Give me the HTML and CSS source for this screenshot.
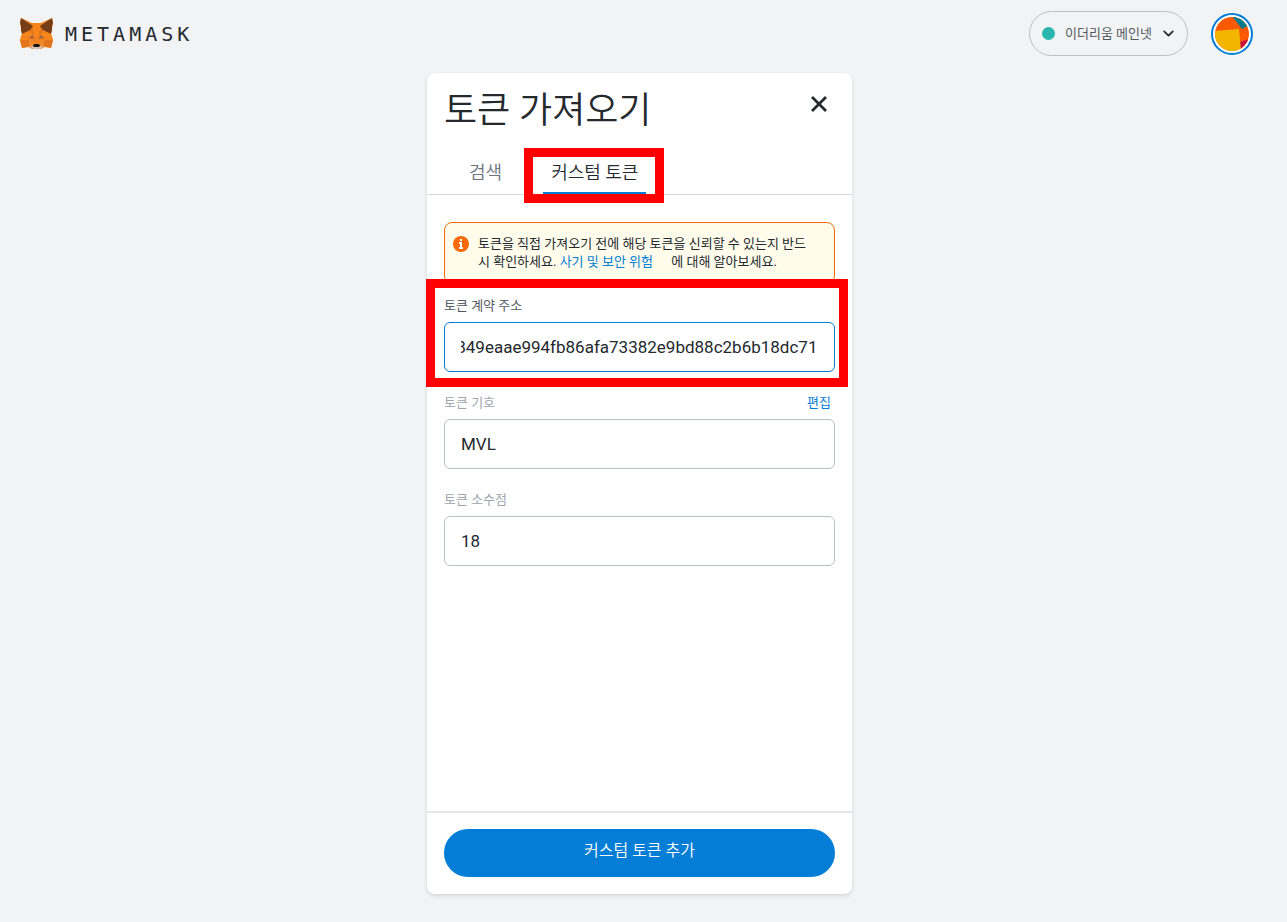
FILE: index.html
```html
<!DOCTYPE html>
<html lang="ko">
<head>
<meta charset="utf-8">
<meta name="viewport" content="width=device-width, initial-scale=1">
<title>MetaMask</title>
<link rel="stylesheet" href="styles.css">
</head>
<body>
<header class="app-header">
  <a class="brand" href="#">
    <svg class="brand-fox" viewBox="0 0 35 33" aria-hidden="true">
      <path fill="#f08223" d="M2 1l11 5h9l11-5 1 5-2 11 2 6-2 8-7-1-3 2h-9l-3-2-7 1-2-8 2-6L1 6z"/>
      <path fill="#f6851b" d="M13 6h9l-2 13h-5z"/>
      <path fill="#e2761b" d="M13 6l2 13-5-3zM22 6l-2 13 5-3z"/>
      <path fill="#763d16" d="M2 1l12 8-3 4-8 4-1-4 0-4-1-3zM33 1L21 9l3 4 8 4 1-4 0-4 1-3z"/>
      <path fill="#f6851b" d="M3 17l8-3 3 5-4 3-9 1zM32 17l-8-3-3 5 4 3 9 1z"/>
      <path fill="#e4751f" d="M1 23h9l0 6-7 2zM34 23h-9l0 6 7 2z"/>
      <path fill="#f08a30" d="M10 22l5 4-1 3-4 0zM25 22l-5 4 1 3 4 0z"/>
      <path fill="#cd6116" d="M9 21l5-3 1 4zM26 21l-5-3-1 4z"/>
      <path fill="#77706c" d="M10 20l4-1 0 2zM25 20l-4-1 0 2z"/>
      <path fill="#d7c1b3" d="M11 29l3 0h7l3 0-3 3h-7z"/>
      <path fill="#161616" d="M15 27h5l1 2-1 1h-5l-1-1z"/>
    </svg>
    <span class="brand-name">METAMASK</span>
  </a>
  <div class="header-actions">
    <button class="network" type="button">
      <span class="network-dot"></span>
      <span>이더리움 메인넷</span>
      <svg class="network-chevron" viewBox="0 0 12 8" aria-hidden="true"><path d="M2 2l4 4 4-4" fill="none" stroke="#24292e" stroke-width="1.6" stroke-linecap="round" stroke-linejoin="round"/></svg>
    </button>
    <button class="account" type="button" aria-label="계정">
      <svg class="account-icon" viewBox="0 0 34 34" aria-hidden="true">
        <clipPath id="disc"><circle cx="17" cy="17" r="17"/></clipPath>
        <g clip-path="url(#disc)">
          <path fill="#fb5a02" d="M0 0h34v34H0z"/>
          <path fill="#037d8e" d="M17 -1l10 13 9-5V-1z"/>
          <path fill="#c8143c" d="M25 25l9-3v12h-9z"/>
          <path fill="#f3b500" d="M-1 14l25-2 2 22H-1z"/>
        </g>
      </svg>
    </button>
  </div>
</header>

<main class="page">
  <section class="card">
    <div class="card-header">
      <div class="title-row">
        <h1 class="title">토큰 가져오기</h1>
        <button class="close" type="button" aria-label="닫기">
          <svg class="close-icon" viewBox="0 0 18 18" aria-hidden="true"><path d="M2 2l14 14M16 2L2 16" stroke="#24292e" stroke-width="2.8" fill="none"/></svg>
        </button>
      </div>
      <div class="tabs" role="tablist">
        <button class="tab" type="button" role="tab" aria-selected="false">검색</button>
        <button class="tab tab-active" type="button" role="tab" aria-selected="true">커스텀 토큰<span class="mark mark-tab"></span></button>
      </div>
    </div>

    <form class="form">
      <div class="notice">
        <svg class="notice-icon" viewBox="0 0 16 16" aria-hidden="true"><circle cx="8" cy="8" r="8" fill="#f66a0a"/><path fill="#fff" d="M7 3h2v2H7zM6 6h3v5h1v2H6v-2h1V8H6z"/></svg>
        <p class="notice-text">토큰을 직접 가져오기 전에 해당 토큰을 신뢰할 수 있는지 반드<br>시 확인하세요. <a class="notice-link" href="#">사기 및 보안 위험</a> 에 대해 알아보세요.</p>
      </div>
      <div class="fields">
        <div class="field">
          <label class="label" for="address">토큰 계약 주소</label>
          <input class="input input-focus" id="address" type="text" value="0xa849eaae994fb86afa73382e9bd88c2b6b18dc71" spellcheck="false">
          <span class="mark mark-field"></span>
        </div>
        <div class="field">
          <div class="label-row">
            <label class="label label-muted" for="symbol">토큰 기호</label>
            <button class="edit" type="button">편집</button>
          </div>
          <input class="input" id="symbol" type="text" value="MVL">
        </div>
        <div class="field">
          <label class="label label-muted" for="decimals">토큰 소수점</label>
          <input class="input" id="decimals" type="text" value="18">
        </div>
      </div>
    </form>

    <div class="card-footer">
      <button class="submit" type="button">커스텀 토큰 추가</button>
    </div>
  </section>
</main>
<script src="script.js"></script>
</body>
</html>
```
FILE: styles.css
```css
* {
  box-sizing: border-box;
}

body {
  margin: 0;
  min-height: 100vh;
  display: flex;
  flex-direction: column;
  background: #f2f3f5;
  color: #24292e;
  font-family: Roboto, "Noto Sans CJK KR", sans-serif;
  font-size: 13px;
  line-height: 18px;
}

button,
input {
  font: inherit;
  color: inherit;
}

button {
  padding: 0;
  border: 0;
  background: none;
  cursor: pointer;
}

svg {
  display: block;
}

.app-header {
  display: flex;
  align-items: center;
  justify-content: space-between;
  padding: 11px 34px 17px 19px;
}

.brand {
  display: flex;
  align-items: center;
  gap: 11px;
  color: #24292e;
  text-decoration: none;
}

.brand-fox {
  width: 35px;
  height: 33px;
}

.brand-name {
  font-family: "DejaVu Sans Mono", monospace;
  font-size: 20px;
  line-height: 24px;
  letter-spacing: 4px;
}

.header-actions {
  display: flex;
  align-items: center;
  gap: 23px;
}

.network {
  display: flex;
  align-items: center;
  gap: 10px;
  height: 45px;
  padding: 0 12px;
  border: 1px solid #bbc0c5;
  border-radius: 23px;
  color: #535a61;
}

.network-dot {
  width: 13px;
  height: 13px;
  border-radius: 50%;
  background: #29b6af;
}

.network-chevron {
  width: 13px;
  height: 9px;
}

.account {
  padding: 2px;
  border: 2px solid #037dd6;
  border-radius: 50%;
  background: #fff;
}

.account-icon {
  width: 34px;
  height: 34px;
}

.page {
  flex: 1;
  display: flex;
  justify-content: center;
  padding: 0 8px 28px 0;
}

.card {
  display: flex;
  flex-direction: column;
  width: 100%;
  max-width: 425px;
  border-radius: 8px;
  background: #fff;
  box-shadow: 0 2px 4px rgba(0, 0, 0, 0.12);
}

.card-header {
  border-bottom: 1px solid #d6d9dc;
}

.title-row {
  display: flex;
  justify-content: space-between;
  align-items: flex-start;
  padding: 14px 24px 0 17px;
}

.title {
  margin: 0;
  font-size: 36px;
  line-height: 48px;
  font-weight: 350;
}

.close {
  margin-top: 8px;
}

.close-icon {
  width: 18px;
  height: 18px;
}

.tabs {
  display: flex;
  gap: 33px;
  padding: 20px 34px 0;
}

.tab {
  position: relative;
  padding: 6px 8px 7px;
  border-bottom: 2px solid transparent;
  color: #6a737d;
  font-size: 18px;
  line-height: 24px;
  font-weight: 350;
}

.tab-active {
  border-color: #037dd6;
  color: #24292e;
}

.mark {
  position: absolute;
  border: 9px solid #f00;
  pointer-events: none;
}

.mark-tab {
  inset: -7px -18px -11px -19px;
}

.mark-field {
  inset: -18px -13px -15px -18px;
}

.form {
  flex: 1;
  padding: 27px 17px;
}

.notice {
  display: flex;
  gap: 9px;
  padding: 12px 8px;
  border: 1px solid #f66a0a;
  border-radius: 8px;
  background: #fffcec;
}

.notice-icon {
  flex: none;
  width: 16px;
  height: 16px;
  margin-top: 1px;
}

.notice-text {
  margin: 0;
}

.notice-link {
  margin-right: 15px;
  color: #037dd6;
  text-decoration: none;
}

.fields {
  display: grid;
  gap: 22px;
  padding-top: 13px;
}

.field {
  position: relative;
  display: grid;
  gap: 7px;
}

.label {
  color: #535a61;
}

.label-muted {
  color: #9fa6ae;
}

.label-row {
  display: flex;
  justify-content: space-between;
  padding-right: 4px;
}

.edit {
  color: #037dd6;
}

.input {
  width: 100%;
  height: 50px;
  padding: 0 17px 0 16px;
  border: 1px solid #bbc0c5;
  border-radius: 6px;
  outline: 0;
  background: #fff;
  font-size: 17px;
}

.input-focus {
  border-color: #037dd6;
}

.card-footer {
  padding: 16px 17px 17px;
  border-top: 2px solid #e4e6e8;
}

.submit {
  width: 100%;
  height: 48px;
  padding-bottom: 4px;
  border-radius: 24px;
  background: #037dd6;
  color: #fff;
  font-size: 16px;
  font-weight: 350;
}
```
FILE: script.js
```js
// Show the end of the contract address, which is longer than its box.
const address = document.getElementById("address");
address.scrollLeft = address.scrollWidth;
```
